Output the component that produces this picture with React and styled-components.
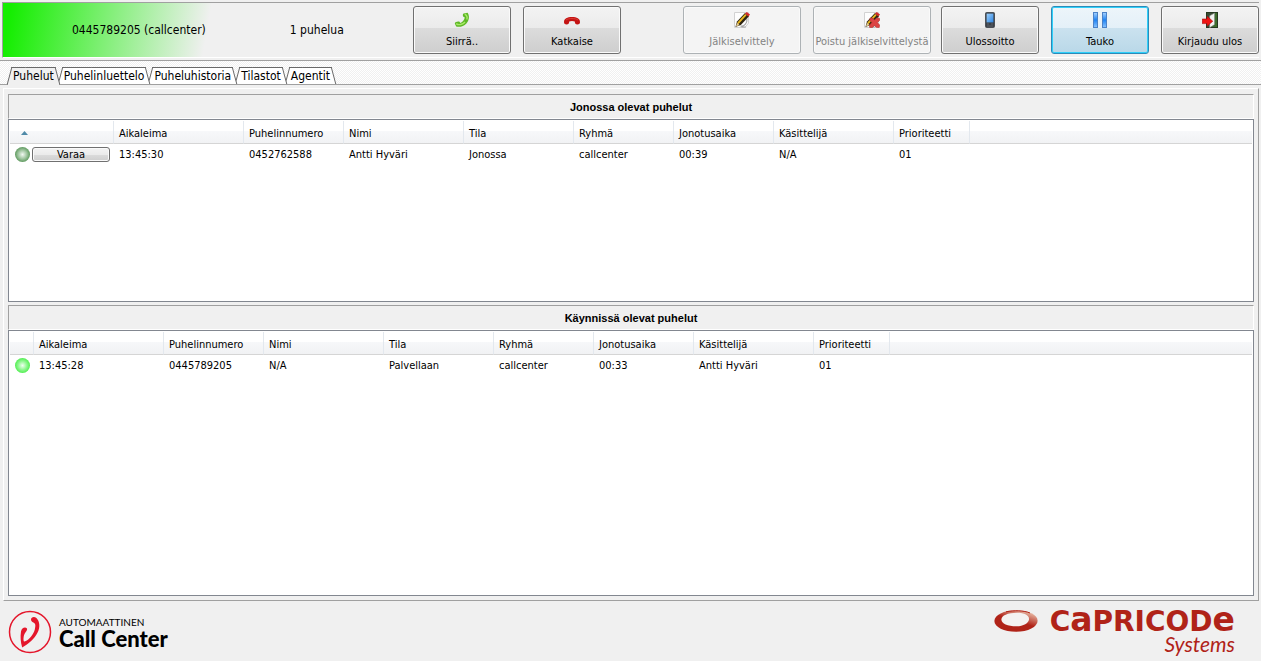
import React, { useState } from "react";
import styled, { createGlobalStyle, css } from "styled-components";

const GlobalStyle = createGlobalStyle`
  * {
    box-sizing: border-box;
  }

  body {
    margin: 0;
    background-color: #f0f0f0;
    color: #000;
    font-family: Tahoma, "DejaVu Sans Condensed", "Noto Sans", sans-serif;
    font-size: 11px;
  }

  button {
    font-family: inherit;
    color: inherit;
  }
`;

const Page = styled.div`
  display: flex;
  flex-direction: column;
  min-height: 100vh;
`;

const Header = styled.header`
  display: flex;
  align-items: center;
  height: 56px;
  margin: 2px 2px 2px 2px;
  border-top: 1px solid #a0a0a0;
  border-left: 1px solid #a0a0a0;
  border-bottom: 1px solid #fff;
`;

const CallStatus = styled.div`
  display: flex;
  flex: 1;
  align-items: center;
  align-self: stretch;
  gap: 84px;
  padding-left: 69px;
  font-size: 12px;
  white-space: nowrap;
  background: linear-gradient(100deg, #14ee00 0, #14ee00 8px, #f0f0f0 206px);
`;

const ButtonGroup = styled.div`
  display: flex;
  gap: 12px;
  margin-right: ${(props) => props.$space || 0}px;
`;

const ToolButton = styled.button`
  display: flex;
  flex-direction: column;
  align-items: center;
  gap: 6px;
  width: ${(props) => (props.$wide ? "118px" : "98px")};
  height: 48px;
  padding: 5px 0 0;
  border: 1px solid #707070;
  border-radius: 3px;
  background: linear-gradient(#f3f3f3, #ebebeb 45%, #dcdcdc 45%, #cecece);
  box-shadow: inset 0 0 0 1px #fafafa;
  font-size: 11px;
  line-height: 16px;
  white-space: nowrap;

  &:disabled {
    border-color: #adb2b5;
    background: #f4f4f4;
    color: #838383;
  }

  ${(props) =>
    props.$active &&
    css`
      border-color: #2c8ab8;
      background: linear-gradient(#edf5fa, #e4f0f8 45%, #cbe2ef 45%, #b9d8e8);
      box-shadow: inset 0 0 0 1px #2fd0fa;
    `}
`;

const TabStrip = styled.div`
  display: flex;
  align-items: flex-end;
  gap: 2px;
  height: 25px;
  padding-left: 9px;
  border-top: 1px solid #a0a0a0;
  border-bottom: 1px solid #a0a0a0;
  background: repeating-conic-gradient(#fff 0 25%, #f0f0f0 0 50%) 0 0 / 2px 2px;
`;

const Tab = styled.button`
  position: relative;
  z-index: ${(props) => props.$order};
  height: ${(props) => (props.$selected ? "18px" : "17px")};
  margin-bottom: ${(props) => (props.$selected ? "-1px" : "0")};
  padding: 0 4px;
  border: 0;
  background: none;
  font-size: 12px;
  line-height: 19px;
  white-space: nowrap;

  &::before,
  &::after {
    content: "";
    position: absolute;
    z-index: -1;
    top: 0;
    bottom: 0;
    width: 60%;
    border-top: 1px solid #696969;
    background: ${(props) => (props.$selected ? "#f0f0f0" : "#fff")};
  }

  &::before {
    left: 0;
    border-left: 1px solid #696969;
    transform: skewX(-15deg);
  }

  &::after {
    right: 0;
    border-right: 1px solid #696969;
    transform: skewX(15deg);
  }
`;

const Panel = styled.main`
  display: flex;
  flex: 1;
  flex-direction: column;
  gap: 3px;
  margin: 3px 2px 0 3px;
  padding: 5px 4px 4px;
  border: 1px solid #fff;
  border-right-color: #a0a0a0;
  border-bottom-color: #a0a0a0;
`;

const Section = styled.section`
  display: flex;
  flex-direction: column;
  flex: ${(props) => props.$grow} 1 0;
`;

const SectionTitle = styled.h2`
  height: 25px;
  margin: 0;
  border: 1px solid #a0a0a0;
  border-right-color: #fff;
  border-bottom-color: #fff;
  font-family: Arial, "Liberation Sans", sans-serif;
  font-size: 11px;
  font-weight: bold;
  line-height: 24px;
  text-align: center;
`;

const ListBox = styled.div`
  flex: 1;
  padding: 1px;
  border: 1px solid #828790;
  background-color: #fff;
`;

const Table = styled.table`
  width: 100%;
  table-layout: fixed;
  border-collapse: separate;
  border-spacing: 0;
`;

const Col = styled.col`
  width: ${(props) => (props.$width ? `${props.$width}px` : "auto")};
`;

const HeadCell = styled.th`
  height: 23px;
  padding: 2px 0 0 5px;
  border-right: 1px solid #e3e8ee;
  border-bottom: 1px solid #d5d5d5;
  background: linear-gradient(#fff 45%, #f7f8fa 45%, #f1f2f4);
  font-weight: normal;
  text-align: left;
  white-space: nowrap;

  &:last-child {
    border-right: 0;
  }
`;

const Cell = styled.td`
  height: 21px;
  padding: 0 0 0 5px;
  white-space: nowrap;
`;

const StateContent = styled.div`
  display: flex;
  align-items: center;
  gap: 2px;
`;

const StateDot = styled.span`
  flex: none;
  width: 15px;
  height: 15px;
  border-radius: 50%;
  background: ${(props) =>
    props.$state === "active"
      ? "radial-gradient(closest-side, #effff0, #8cf78c 60%, #52ee52)"
      : "radial-gradient(closest-side, #f2f8f2, #9dc49d 60%, #5f9a5f)"};
`;

const ReserveButton = styled.button`
  width: 78px;
  height: 15px;
  padding: 0;
  border: 1px solid #707070;
  border-radius: 3px;
  background: linear-gradient(#f3f3f3, #ebebeb 50%, #dcdcdc 50%, #cecece);
  box-shadow: inset 0 0 0 1px #fafafa;
  font-size: 11px;
  line-height: 13px;
`;

const SortArrow = styled.svg`
  display: block;
  margin-left: 6px;
`;

const Footer = styled.footer`
  display: flex;
  align-items: flex-start;
  justify-content: space-between;
  height: 60px;
  padding: 9px 26px 0 8px;
`;

const ProductLogo = styled.div`
  display: flex;
  gap: 7px;
`;

const ProductName = styled.div`
  display: flex;
  flex-direction: column;
  padding-top: 6px;
  font-family: Lato, sans-serif;
`;

const ProductKind = styled.span`
  font-size: 10px;
  line-height: 12px;
`;

const ProductTitle = styled.span`
  font-family: "Lato Black", Lato, sans-serif;
  font-size: 22px;
  font-weight: 900;
  line-height: 22px;
`;

const CompanyLogo = styled.div`
  display: flex;
  gap: 12px;
  color: #b02318;
`;

const CompanyName = styled.div`
  display: flex;
  flex-direction: column;
  align-items: flex-end;
`;

const CompanyWord = styled.span`
  font-family: "DejaVu Sans", sans-serif;
  font-size: 28px;
  font-weight: bold;
  line-height: 20px;
`;

const TallLetter = styled.span`
  font-size: 33px;
`;

const CompanyUnit = styled.span`
  font-family: Lato, sans-serif;
  font-size: 21px;
  font-style: italic;
  line-height: 24px;
`;

const TransferIcon = () => (
  <svg width="16" height="16" viewBox="0 0 16 16">
    <path
      d="M9.6 1.4 L13.6 0.8 C15.8 4.2 15.2 8.4 12.4 11.4 C9.6 14.4 5.4 15.6 2.2 14.4 L0.8 11.4 C1.2 9.6 4.2 9 5.6 9.8 L6.2 11 C8.2 10.6 10.4 8 10.8 5.6 L9.4 4.8 C8.6 3.6 8.6 2 9.6 1.4 Z"
      fill="#5fb827"
    />
    <path
      d="M10.8 2.2 C12.2 3 13.8 5 12.8 7.6 M2.2 11.6 C4.6 13.6 8.8 12.6 11 10"
      fill="none"
      stroke="#a8ea68"
      strokeWidth="1.4"
    />
  </svg>
);

const HangUpIcon = () => (
  <svg width="16" height="16" viewBox="0 0 16 16">
    <path
      d="M0 10 C0 6.6 3.2 5 8 5 C12.8 5 16 6.6 16 10 C16 11.8 15.2 12.4 13.4 12.4 C11.6 12.4 10.8 11.6 10.8 9.6 C9.4 8.8 6.6 8.8 5.2 9.6 C5.2 11.6 4.4 12.4 2.6 12.4 C0.8 12.4 0 11.8 0 10 Z"
      fill="#c41414"
    />
    <path
      d="M2 8 C4.6 6 11.4 6 14 8"
      fill="none"
      stroke="#d93a32"
      strokeWidth="1"
    />
  </svg>
);

const NoteIcon = ({ crossed }) => (
  <svg width="16" height="16" viewBox="0 0 16 16">
    <path d="M0.5 0.5 H14.5 V11 L11 15.5 H0.5 Z" fill="#fdfdfd" stroke="#d2d2d2" />
    <path
      d="M6.5 14 C10 15 13.4 11 13 6.6 M7.5 15 H12"
      fill="none"
      stroke="#a6a6a6"
      strokeWidth="1.2"
    />
    <path d="M1.4 15 L3 9.6 L11 1 L15 4.2 L6.8 13 Z" fill="#2e2410" />
    <path d="M3.4 10.6 L11.2 2 L12.6 3.2 L4.4 12.2 Z" fill="#e9b820" />
    <path d="M2 14.4 L3 10.8 L5.6 13 Z" fill="#e8cf96" />
    <path d="M11 1.6 L12.8 0 L16 2.4 L14.4 4.4 Z" fill="#d42a2a" />
    {crossed && (
      <path
        d="M6 6 L8.6 6 L10.5 8 L12.6 6 L15.6 6.4 L15.6 8.4 L13.4 10.6 L15.6 13 L15.2 15.6 L12.6 15.6 L10.5 13.4 L8.4 15.6 L5.6 15.4 L5.6 13 L7.8 10.6 L5.8 8.4 Z"
        fill="#dc4444"
        stroke="#b52b2b"
        strokeWidth="0.6"
      />
    )}
  </svg>
);

const PhoneIcon = () => (
  <svg width="16" height="16" viewBox="0 0 16 16">
    <defs>
      <linearGradient id="screen" x1="0" y1="0" x2="1" y2="1">
        <stop offset="0" stopColor="#9fd0fa" />
        <stop offset="1" stopColor="#2d86e4" />
      </linearGradient>
    </defs>
    <rect x="3.5" y="0.5" width="9" height="15" rx="1" fill="#3b4148" stroke="#4b5056" />
    <rect x="4.6" y="1.6" width="6.8" height="8.8" fill="url(#screen)" />
    <path d="M5 12 H7 M9 12 H11 M5 14 H11" stroke="#5c636b" />
  </svg>
);

const PauseIcon = () => (
  <svg width="16" height="16" viewBox="0 0 16 16">
    <defs>
      <linearGradient id="bar" x1="0" y1="0" x2="0" y2="1">
        <stop offset="0" stopColor="#a6d3ff" />
        <stop offset="0.5" stopColor="#1f83f2" />
        <stop offset="1" stopColor="#8ac4ff" />
      </linearGradient>
    </defs>
    <rect x="1.5" y="0.5" width="4" height="15" fill="url(#bar)" stroke="#4a82c8" />
    <rect x="10.5" y="0.5" width="4" height="15" fill="url(#bar)" stroke="#4a82c8" />
  </svg>
);

const LogoutIcon = () => (
  <svg width="16" height="16" viewBox="0 0 16 16">
    <rect x="4.5" y="0.5" width="11" height="15" fill="#3d6b2c" stroke="#26381f" />
    <path d="M5 1 H12 L9 4 V15 H5 Z" fill="#3a4a34" />
    <path d="M7.6 3.8 L12.6 1 V12.6 L7.6 15.8 Z" fill="#f2f2f0" stroke="#767b73" strokeWidth="0.6" />
    <path d="M0.2 7 H5 V4.2 L10.8 9.2 L5 14.2 V11.6 H0.2 Z" fill="#ee1414" stroke="#a90d0d" strokeWidth="0.6" />
  </svg>
);

const CallCenterMark = () => (
  <svg width="44" height="44" viewBox="0 0 44 44">
    <circle cx="22" cy="22" r="20.5" fill="none" stroke="#e4162b" strokeWidth="1.5" />
    <path
      d="M23 9.6 C23 6.8 26.4 6 28.4 8 C32 11.6 32.2 17.6 29.6 22.6 C26.6 28.6 20.6 34.2 14.2 37.4 C12.6 32.6 12.2 26.6 13 21.6 C13.6 18 17 16.4 19 18.4 C19.8 20.4 16.4 22.6 15.8 26 C15.2 29.6 15.4 31.8 16.6 31.6 C21.4 29.6 25.4 24.6 26.8 19.4 C27.8 15.4 27.6 13.4 25.4 12.4 C24 12 23 11.2 23 9.6 Z"
      fill="#e4162b"
    />
  </svg>
);

const CapricodeMark = () => (
  <svg width="44" height="22" viewBox="0 0 44 22">
    <defs>
      <linearGradient id="ring" x1="0.4" y1="1" x2="0.95" y2="0.1">
        <stop offset="0.45" stopColor="#b02318" />
        <stop offset="0.9" stopColor="#e3ac98" />
      </linearGradient>
    </defs>
    <path
      d="M22 0.2 C34 0.2 43.6 4.6 43.6 10.8 C43.6 17 34 21.8 22 21.8 C10 21.8 0.4 17 0.4 11 C0.4 5 10 0.2 22 0.2 Z"
      fill="url(#ring)"
    />
    <path
      fill="none"
      stroke="#b02318"
      strokeWidth="1"
      d="M12 1.8 C20 0.2 30 0.4 36 3"
    />
    <path
      fill="#f4f2f1"
      d="M23 2.8 C13.6 2.8 7.4 5.6 7.4 9.4 C7.4 13.4 13.6 16.2 22.4 16.2 C29.6 16.2 34.6 13 35 9.4 C35.4 5.6 31 2.8 23 2.8 Z"
    />
  </svg>
);

const tabs = ["Puhelut", "Puhelinluettelo", "Puheluhistoria", "Tilastot", "Agentit"];

const columns = [
  { title: "Aikaleima", width: 130 },
  { title: "Puhelinnumero", width: 100 },
  { title: "Nimi", width: 120 },
  { title: "Tila", width: 110 },
  { title: "Ryhmä", width: 100 },
  { title: "Jonotusaika", width: 100 },
  { title: "Käsittelijä", width: 120 },
  { title: "Prioriteetti", width: 76 },
];

const queuedCalls = [
  ["13:45:30", "0452762588", "Antti Hyväri", "Jonossa", "callcenter", "00:39", "N/A", "01"],
];

const activeCalls = [
  ["13:45:28", "0445789205", "N/A", "Palvellaan", "callcenter", "00:33", "Antti Hyväri", "01"],
];

const CallTable = ({ calls, state, stateWidth, sortable }) => (
  <Table>
    <colgroup>
      <Col $width={stateWidth} />
      {columns.map((column) => (
        <Col key={column.title} $width={column.width} />
      ))}
      <Col />
    </colgroup>
    <thead>
      <tr>
        <HeadCell>
          {sortable && (
            <SortArrow width="7" height="4" viewBox="0 0 7 4">
              <path d="M0 4 L3.5 0 L7 4 Z" fill="#4f8aa8" />
            </SortArrow>
          )}
        </HeadCell>
        {columns.map((column) => (
          <HeadCell key={column.title}>{column.title}</HeadCell>
        ))}
        <HeadCell />
      </tr>
    </thead>
    <tbody>
      {calls.map((call) => (
        <tr key={call[1]}>
          <Cell>
            <StateContent>
              <StateDot $state={state} />
              {state === "queued" && <ReserveButton>Varaa</ReserveButton>}
            </StateContent>
          </Cell>
          {call.map((value, i) => (
            <Cell key={columns[i].title}>{value}</Cell>
          ))}
          <Cell />
        </tr>
      ))}
    </tbody>
  </Table>
);

const App = () => {
  const [selectedTab, setSelectedTab] = useState("Puhelut");

  return (
    <Page>
      <GlobalStyle />
      <Header>
        <CallStatus>
          <span>0445789205 (callcenter)</span>
          <span>1 puhelua</span>
        </CallStatus>
        <ButtonGroup $space={62}>
          <ToolButton>
            <TransferIcon />
            Siirrä..
          </ToolButton>
          <ToolButton>
            <HangUpIcon />
            Katkaise
          </ToolButton>
        </ButtonGroup>
        <ButtonGroup $space={10}>
          <ToolButton $wide disabled>
            <NoteIcon />
            Jälkiselvittely
          </ToolButton>
          <ToolButton $wide disabled>
            <NoteIcon crossed />
            Poistu jälkiselvittelystä
          </ToolButton>
        </ButtonGroup>
        <ButtonGroup>
          <ToolButton>
            <PhoneIcon />
            Ulossoitto
          </ToolButton>
          <ToolButton $active>
            <PauseIcon />
            Tauko
          </ToolButton>
          <ToolButton>
            <LogoutIcon />
            Kirjaudu ulos
          </ToolButton>
        </ButtonGroup>
      </Header>

      <TabStrip role="tablist">
        {tabs.map((tab, i) => (
          <Tab
            key={tab}
            role="tab"
            aria-selected={tab === selectedTab}
            $selected={tab === selectedTab}
            $order={tab === selectedTab ? tabs.length + 1 : tabs.length - i}
            onClick={() => setSelectedTab(tab)}
          >
            {tab}
          </Tab>
        ))}
      </TabStrip>

      <Panel>
        <Section $grow={208}>
          <SectionTitle>Jonossa olevat puhelut</SectionTitle>
          <ListBox>
            <CallTable calls={queuedCalls} state="queued" stateWidth={104} sortable />
          </ListBox>
        </Section>
        <Section $grow={291}>
          <SectionTitle>Käynnissä olevat puhelut</SectionTitle>
          <ListBox>
            <CallTable calls={activeCalls} state="active" stateWidth={24} />
          </ListBox>
        </Section>
      </Panel>

      <Footer>
        <ProductLogo>
          <CallCenterMark />
          <ProductName>
            <ProductKind>AUTOMAATTINEN</ProductKind>
            <ProductTitle>Call Center</ProductTitle>
          </ProductName>
        </ProductLogo>
        <CompanyLogo>
          <CapricodeMark />
          <CompanyName>
            <CompanyWord>
              C<TallLetter>a</TallLetter>PRICOD<TallLetter>e</TallLetter>
            </CompanyWord>
            <CompanyUnit>Systems</CompanyUnit>
          </CompanyName>
        </CompanyLogo>
      </Footer>
    </Page>
  );
};

export default App;
